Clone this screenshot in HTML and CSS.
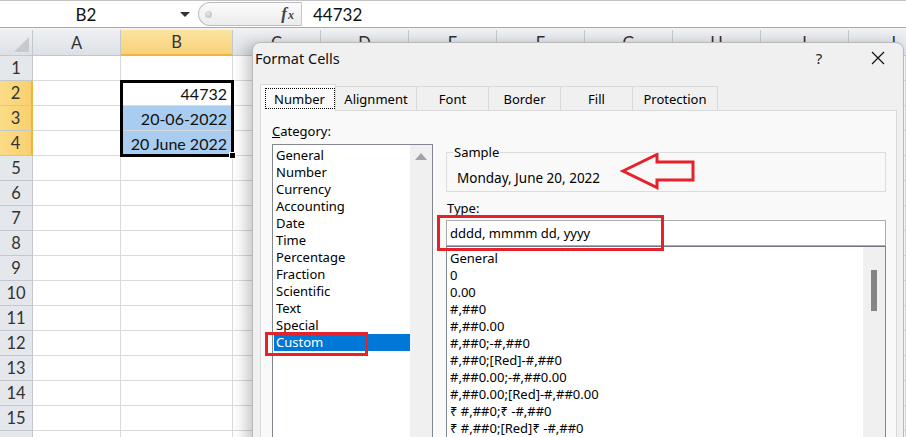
FILE: index.html
```html
<!DOCTYPE html>
<html>
<head>
<meta charset="utf-8">
<link rel="stylesheet" href="styles.css">
</head>
<body>
<div class="app">
  <div class="fbar">
    <div class="namebox"><span class="nb-text">B2</span><span class="nb-arrow"></span></div>
    <div class="fx-pill"><span class="dot"></span><span class="fx"><i>f</i><i class="x">x</i></span></div>
    <div class="formula">44732</div>
  </div>
  <div class="fgap"></div>
  <div class="sheet">
    <div class="row hdr">
      <div class="corner"><span class="tri"></span></div>
      <div class="ch">A</div><div class="ch on">B</div><div class="ch">C</div><div class="ch">D</div><div class="ch">E</div><div class="ch">F</div><div class="ch">G</div><div class="ch">H</div><div class="ch">I</div><div class="ch">J</div>
    </div>
    <div class="row"><div class="rh">1</div><div class="c"></div><div class="c"></div><div class="c"></div></div>
    <div class="row"><div class="rh on">2</div><div class="c"></div><div class="c num">44732</div><div class="c"></div></div>
    <div class="row"><div class="rh on">3</div><div class="c"></div><div class="c num hl">20-06-2022</div><div class="c"></div></div>
    <div class="row"><div class="rh on">4</div><div class="c"></div><div class="c num hl">20 June 2022</div><div class="c"></div></div>
    <div class="row"><div class="rh">5</div><div class="c"></div><div class="c"></div><div class="c"></div></div>
    <div class="row"><div class="rh">6</div><div class="c"></div><div class="c"></div><div class="c"></div></div>
    <div class="row"><div class="rh">7</div><div class="c"></div><div class="c"></div><div class="c"></div></div>
    <div class="row"><div class="rh">8</div><div class="c"></div><div class="c"></div><div class="c"></div></div>
    <div class="row"><div class="rh">9</div><div class="c"></div><div class="c"></div><div class="c"></div></div>
    <div class="row"><div class="rh">10</div><div class="c"></div><div class="c"></div><div class="c"></div></div>
    <div class="row"><div class="rh">11</div><div class="c"></div><div class="c"></div><div class="c"></div></div>
    <div class="row"><div class="rh">12</div><div class="c"></div><div class="c"></div><div class="c"></div></div>
    <div class="row"><div class="rh">13</div><div class="c"></div><div class="c"></div><div class="c"></div></div>
    <div class="row"><div class="rh">14</div><div class="c"></div><div class="c"></div><div class="c"></div></div>
    <div class="row"><div class="rh">15</div><div class="c"></div><div class="c"></div><div class="c"></div></div>
    <div class="row"><div class="rh"></div><div class="c"></div><div class="c"></div><div class="c"></div></div>
  </div>
  <div class="selection"><span class="handle"></span></div>

  <div class="dialog">
    <div class="titlebar">
      <div class="title">Format Cells</div>
      <div class="tbtn">?</div>
      <div class="tbtn"><svg width="14" height="14" viewBox="0 0 14 14"><path d="M1 1 L13 13 M13 1 L1 13" stroke="#111" stroke-width="1.2" fill="none"/></svg></div>
    </div>
    <div class="dbody">
      <div class="tabs">
        <div class="tab active w-num"><span class="focus">Number</span></div>
        <div class="tab w-align">Alignment</div>
        <div class="tab w-std">Font</div>
        <div class="tab w-std">Border</div>
        <div class="tab w-std">Fill</div>
        <div class="tab w-prot">Protection</div>
      </div>
      <div class="panel">
        <div class="leftcol">
          <div class="label"><u>C</u>ategory:</div>
          <div class="listbox catlist">
            <div class="items">
              <div class="item">General</div>
              <div class="item">Number</div>
              <div class="item">Currency</div>
              <div class="item">Accounting</div>
              <div class="item">Date</div>
              <div class="item">Time</div>
              <div class="item">Percentage</div>
              <div class="item">Fraction</div>
              <div class="item">Scientific</div>
              <div class="item">Text</div>
              <div class="item">Special</div>
              <div class="item selected">Custom</div>
            </div>
            <div class="vscroll"><span class="uparrow"></span></div>
          </div>
        </div>
        <div class="rightcol">
          <fieldset class="sample">
            <legend>Sample</legend>
            <div class="sample-text">Monday, June 20, 2022</div>
          </fieldset>
          <div class="label type-label">Type:</div>
          <div class="typebox">dddd, mmmm dd, yyyy</div>
          <div class="listbox typelist">
            <div class="items">
              <div class="item">General</div>
              <div class="item">0</div>
              <div class="item">0.00</div>
              <div class="item">#,##0</div>
              <div class="item">#,##0.00</div>
              <div class="item">#,##0;-#,##0</div>
              <div class="item">#,##0;[Red]-#,##0</div>
              <div class="item">#,##0.00;-#,##0.00</div>
              <div class="item">#,##0.00;[Red]-#,##0.00</div>
              <div class="item">₹ #,##0;₹ -#,##0</div>
              <div class="item">₹ #,##0;[Red]₹ -#,##0</div>
            </div>
            <div class="vscroll"><span class="thumb"></span></div>
          </div>
        </div>
      </div>
    </div>
  </div>

  <div class="mark mark-custom"></div>
  <div class="mark mark-type"></div>
  <svg class="arrow" width="80" height="40" viewBox="0 0 80 40">
    <polygon points="4,18 38,1.5 38,9 74,9 74,27 38,27 38,34.5" fill="none" stroke="#e5212a" stroke-width="3" stroke-linejoin="miter"/>
  </svg>
</div>
</body>
</html>
```
FILE: styles.css
```css
html, body {
  margin: 0;
  padding: 0;
}
body {
  width: 906px;
  height: 437px;
  overflow: hidden;
  background: #ffffff;
}
.app {
  position: relative;
  width: 906px;
  height: 437px;
  overflow: hidden;
  font-family: "Lato", "Liberation Sans", sans-serif;
  color: #222;
}

/* formula bar */
.fbar {
  height: 28px;
  box-sizing: border-box;
  border-top: 1px solid #c4c4c4;
  border-bottom: 1px solid #a9a9a9;
  display: flex;
  background: #fff;
}
.namebox {
  width: 196px;
  display: flex;
  align-items: center;
}
.nb-text {
  width: 172px;
  text-align: center;
  font-size: 17px;
  color: #111;
}
.nb-arrow {
  width: 0;
  height: 0;
  margin-left: 8px;
  border-left: 5px solid transparent;
  border-right: 5px solid transparent;
  border-top: 5px solid #333;
}
.fx-pill {
  margin: 1px 0 1px 2px;
  width: 104px;
  box-sizing: border-box;
  border: 1px solid #bdbdbd;
  border-right: 1px solid #c8c8c8;
  border-radius: 12px 0 0 12px;
  background: linear-gradient(#fbfbfb, #ececec);
  display: flex;
  align-items: center;
  justify-content: space-between;
  padding: 0 7px 0 6px;
}
.dot {
  width: 7px;
  height: 7px;
  border-radius: 50%;
  background: radial-gradient(circle at 40% 35%, #e6e6e6, #b8b8b8);
}
.fx {
  font-family: "Liberation Serif", serif;
  font-size: 17px;
  font-weight: bold;
  color: #444;
  display: flex;
  align-items: baseline;
}
.fx .x {
  font-size: 12px;
  margin-left: 1px;
}
.formula {
  padding-left: 11px;
  display: flex;
  align-items: center;
  font-size: 17px;
  color: #111;
}
.fgap {
  height: 2px;
  background: #f2f2f2;
}

/* sheet grid */
.row {
  display: grid;
  grid-template-columns: 33px 88px 112px 1fr;
  height: 25px;
}
.row.hdr {
  grid-template-columns: 33px 88px 112px repeat(8, 88px);
  height: 26px;
}
.corner, .ch, .rh {
  box-sizing: border-box;
  background: linear-gradient(#eef0f3, #dde1e6);
  border-right: 1px solid #c3c8cf;
  border-bottom: 1px solid #c3c8cf;
  color: #333;
  font-size: 16.5px;
  display: flex;
  align-items: center;
  justify-content: center;
}
.corner {
  position: relative;
}
.tri {
  position: absolute;
  right: 3px;
  bottom: 3px;
  width: 0;
  height: 0;
  border-left: 15px solid transparent;
  border-bottom: 15px solid #c6cacf;
}
.ch.on {
  background: linear-gradient(#fbe3a0, #f8d27a);
  border-bottom: 2px solid #f2b53b;
}
.rh {
  background: #e4e7ec;
}
.rh.on {
  background: linear-gradient(90deg, #fbdc86, #f8d06f);
  border-right: 2px solid #f2b53b;
}
.c {
  box-sizing: border-box;
  border-right: 1px solid #dadada;
  border-bottom: 1px solid #dadada;
  font-size: 16px;
  color: #111;
  display: flex;
  align-items: center;
  justify-content: flex-end;
  padding-right: 5px;
}
.c.hl {
  background: #a9cdf0;
}
.selection {
  position: absolute;
  left: 120px;
  top: 80px;
  width: 114px;
  height: 77px;
  box-sizing: border-box;
  border: 3px solid #000;
}
.handle {
  position: absolute;
  right: -5px;
  bottom: -5px;
  width: 5px;
  height: 5px;
  background: #000;
  border: 1px solid #fff;
}

/* dialog */
.dialog {
  position: absolute;
  left: 252px;
  top: 42px;
  width: 652px;
  height: 420px;
  box-sizing: border-box;
  background: #f0f0f0;
  border: 1px solid #b9b9b9;
  border-radius: 8px 8px 0 0;
  box-shadow: -6px 2px 14px rgba(0, 0, 0, 0.22);
  font-family: "Noto Sans", "DejaVu Sans", sans-serif;
  font-size: 13px;
  color: #000;
}
.titlebar {
  height: 30px;
  display: flex;
  align-items: center;
  padding-left: 2px;
  padding-right: 2px;
}
.title {
  flex: 1;
  font-size: 14.5px;
  color: #111;
}
.tbtn {
  width: 46px;
  height: 30px;
  display: flex;
  align-items: center;
  justify-content: center;
  font-size: 15px;
  color: #222;
}
.tbtn + .tbtn {
  margin-left: 13px;
}
.dbody {
  padding: 11px 6px 0 7px;
}
.tabs {
  display: flex;
  align-items: flex-end;
  height: 26px;
}
.tab {
  box-sizing: border-box;
  height: 24px;
  border: 1px solid #d9d9d9;
  border-bottom: none;
  margin-right: -1px;
  display: flex;
  align-items: center;
  justify-content: center;
  background: #f0f0f0;
}
.tab.active {
  height: 27px;
  margin-bottom: -1px;
  background: #f9f9f9;
  position: relative;
  z-index: 1;
}
.w-num { width: 76px; }
.w-align { width: 82px; }
.w-std { width: 73px; }
.w-prot { width: 86px; }
.focus {
  box-sizing: border-box;
  width: 70px;
  height: 21px;
  margin-left: 3px;
  margin-top: 1px;
  border: 1px dotted #000;
  display: flex;
  align-items: center;
  justify-content: center;
}
.panel {
  box-sizing: border-box;
  height: 340px;
  border: 1px solid #d9d9d9;
  background: #f9f9f9;
  display: flex;
  gap: 13px;
  padding: 11px 10px 0 11px;
}
.leftcol {
  width: 161px;
  display: flex;
  flex-direction: column;
}
.rightcol {
  width: 440px;
  display: flex;
  flex-direction: column;
}
.label {
  line-height: 18px;
  height: 18px;
}
.leftcol .label {
  margin-bottom: 4px;
}
.listbox {
  box-sizing: border-box;
  background: #fff;
  border: 1px solid #828790;
  display: flex;
  height: 320px;
}
.items {
  flex: 1;
  padding-top: 2px;
}
.item {
  line-height: 17px;
  height: 17px;
  padding-left: 3px;
  white-space: nowrap;
}
.item.selected {
  background: #0078d7;
  color: #fff;
  margin-left: 1px;
  padding-left: 2px;
}
.vscroll {
  width: 22px;
  background: #f0f0f0;
  position: relative;
}
.uparrow {
  position: absolute;
  left: 5px;
  top: 8px;
  width: 0;
  height: 0;
  border-left: 6px solid transparent;
  border-right: 6px solid transparent;
  border-bottom: 7px solid #a3a3a3;
}
.sample {
  margin: 21px 0 0 0;
  padding: 0 10px 4px 6px;
  border: 1px solid #dcdcdc;
  min-width: 0;
}
.sample legend {
  padding: 0 1px;
  line-height: 18px;
}
.sample-text {
  margin-top: 8px;
  padding-left: 4px;
  line-height: 18px;
  font-size: 13.5px;
}
.type-label {
  margin-top: 7px;
  margin-bottom: 3px;
  padding-left: 1px;
}
.typebox {
  box-sizing: border-box;
  height: 26px;
  border: 1px solid #adadad;
  background: #fff;
  padding-left: 3px;
  display: flex;
  align-items: center;
}
.typelist {
  border-top-color: #6f7585;
  height: 200px;
}
.typelist .items {
  padding-top: 3px;
}
.thumb {
  position: absolute;
  left: 8px;
  top: 23px;
  width: 6px;
  height: 41px;
  background: #858585;
}

/* annotations */
.mark {
  position: absolute;
  box-sizing: border-box;
  border: 3px solid #e5212a;
}
.mark-custom {
  left: 265px;
  top: 332px;
  width: 103px;
  height: 24px;
}
.mark-type {
  left: 437px;
  top: 215px;
  width: 227px;
  height: 36px;
}
.arrow {
  position: absolute;
  left: 619px;
  top: 153px;
}
```
